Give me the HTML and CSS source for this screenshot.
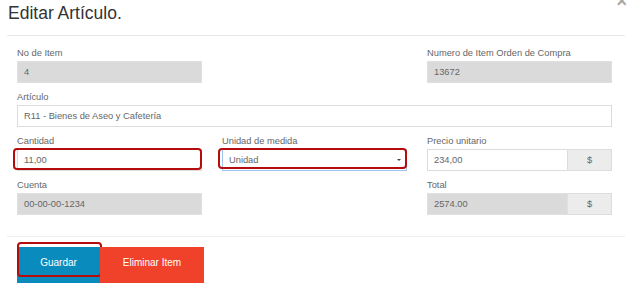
FILE: index.html
```html
<!DOCTYPE html>
<html lang="es">
<head>
    <meta charset="UTF-8">
    <title>Editar Artículo</title>
    <link rel="stylesheet" href="styles.css">
</head>
<body>
    <div class="modal">
        <div class="modal-header">
            <h3>Editar Artículo.</h3>
            <span class="close">&times;</span>
        </div>

        <div class="modal-body">
            <!-- Fila 1 -->
            <div class="row">
                <div class="field">
                    <label>No de Item</label>
                    <div class="input readonly">4</div>
                </div>
                <div class="field"></div>
                <div class="field">
                    <label>Numero de Item Orden de Compra</label>
                    <div class="input readonly">13672</div>
                </div>
            </div>

            <!-- Fila 2 -->
            <div class="row">
                <div class="field wide">
                    <label>Artículo</label>
                    <div class="input">R11 - Bienes de Aseo y Cafetería</div>
                </div>
            </div>

            <!-- Fila 3 -->
            <div class="row">
                <div class="field">
                    <label>Cantidad</label>
                    <div class="input marked mark-left">11,00</div>
                </div>
                <div class="field">
                    <label>Unidad de medida</label>
                    <div class="input select marked mark-select">Unidad<span class="caret"></span></div>
                </div>
                <div class="field">
                    <label>Precio unitario</label>
                    <div class="input-group">
                        <div class="input">234,00</div>
                        <span class="addon">$</span>
                    </div>
                </div>
            </div>

            <!-- Fila 4 -->
            <div class="row">
                <div class="field">
                    <label>Cuenta</label>
                    <div class="input readonly">00-00-00-1234</div>
                </div>
                <div class="field"></div>
                <div class="field">
                    <label>Total</label>
                    <div class="input-group">
                        <div class="input readonly">2574.00</div>
                        <span class="addon">$</span>
                    </div>
                </div>
            </div>
        </div>

        <div class="modal-footer">
            <button class="btn btn-save marked mark-btn">Guardar</button>
            <button class="btn btn-delete">Eliminar Item</button>
        </div>
    </div>
</body>
</html>
```

FILE: styles.css
```css
body {
    margin: 0;
    background: #fff;
    font-family: "Liberation Sans", Arial, sans-serif;
    overflow: hidden;
}
.modal {
    margin: 0 6px 0 7px;
}
.modal-header {
    position: relative;
    height: 35px;
    border-bottom: 1px solid #e8e8e8;
}
.modal-header h3 {
    margin: 0;
    padding: 2px 0 0 1px;
    font-size: 17.5px;
    font-weight: normal;
    color: #333;
    line-height: 22px;
}
.close {
    position: absolute;
    right: -2px;
    top: -8px;
    font-size: 18px;
    font-weight: bold;
    color: #a8a8a8;
    line-height: 18px;
}
.modal-body {
    padding: 11px 13px 0 10px;
}
.row {
    display: grid;
    grid-template-columns: 185px 185px 185px;
    column-gap: 20px;
    margin-bottom: 8px;
}
.field.wide {
    grid-column: 1 / 4;
}
label {
    display: block;
    font-size: 9.3px;
    line-height: 12px;
    color: #666;
    margin-bottom: 2px;
}
.input {
    position: relative;
    height: 22px;
    box-sizing: border-box;
    border: 1px solid #dcdcdc;
    background: #fff;
    font-size: 9.3px;
    line-height: 20px;
    color: #666;
    padding-left: 6px;
}
.input.readonly {
    background: #dadada;
    border-color: #e0e0e0;
}
.input.select {
    border-color: #9ec3ec;
}
.caret {
    position: absolute;
    right: 5px;
    top: 9px;
    border-left: 2px solid transparent;
    border-right: 2px solid transparent;
    border-top: 2px solid #444;
}
.input-group {
    display: flex;
}
.input-group .input {
    flex: 1;
}
.addon {
    width: 44px;
    box-sizing: border-box;
    height: 22px;
    border: 1px solid #dcdcdc;
    border-left: 0;
    background: #ececec;
    color: #666;
    font-size: 9.3px;
    line-height: 20px;
    text-align: center;
}
.modal-footer {
    margin-top: 21px;
    border-top: 1px solid #eeeeee;
    padding: 10px 0 0 10px;
    display: flex;
}
.btn {
    position: relative;
    border: 0;
    height: 36px;
    font-family: inherit;
    font-size: 10px;
    color: #fff;
    padding: 0 0 6px;
}
.btn-save {
    width: 83px;
    background: #0a8bbd;
}
.btn-delete {
    width: 104px;
    background: #f0412a;
}
/* marcas rojas sobre los campos */
.marked::after {
    content: "";
    position: absolute;
    border: 2px solid #b50d0d;
    border-radius: 4px;
    pointer-events: none;
}
.mark-left::after {
    left: -5px;
    right: -1px;
    top: -2px;
    bottom: 0;
}
.mark-select::after {
    left: -5px;
    right: -1px;
    top: -2px;
    bottom: 1px;
}
.mark-btn::after {
    left: 0;
    right: -2px;
    top: -5px;
    bottom: 6px;
}
```
